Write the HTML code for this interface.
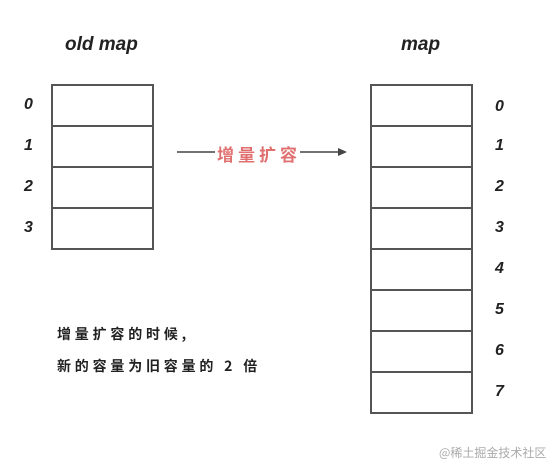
<!DOCTYPE html>
<html><head><meta charset="utf-8"><style>
body{margin:0;width:558px;height:470px;background:#fff;position:relative;overflow:hidden;font-family:"Liberation Sans","Noto Sans CJK SC",sans-serif;color:#222}
.t{position:absolute;font-style:italic;font-weight:bold;font-size:16px;line-height:1}
.box{position:absolute;border:2.5px solid #555;box-sizing:border-box;width:103px;height:43px;background:#fff}
.cn{position:absolute;font-family:"Noto Sans CJK SC",sans-serif;font-weight:bold;font-size:14px;letter-spacing:3.8px;color:#222}
</style></head><body>
<div class="t" style="left:65px;top:35px;font-size:19px">old map</div>
<div class="t" style="left:401px;top:35px;font-size:19px">map</div>
<div class="box" style="left:51px;top:84px"></div>
<div class="box" style="left:51px;top:125px"></div>
<div class="box" style="left:51px;top:166px"></div>
<div class="box" style="left:51px;top:207px"></div>
<div class="t" style="left:24px;top:97px">0</div>
<div class="t" style="left:24px;top:138px">1</div>
<div class="t" style="left:24px;top:179px">2</div>
<div class="t" style="left:24px;top:220px">3</div>
<div class="box" style="left:370px;top:84px"></div>
<div class="box" style="left:370px;top:125px"></div>
<div class="box" style="left:370px;top:166px"></div>
<div class="box" style="left:370px;top:207px"></div>
<div class="box" style="left:370px;top:248px"></div>
<div class="box" style="left:370px;top:289px"></div>
<div class="box" style="left:370px;top:330px"></div>
<div class="box" style="left:370px;top:371px"></div>
<div class="t" style="left:495px;top:99px">0</div>
<div class="t" style="left:495px;top:138px">1</div>
<div class="t" style="left:495px;top:179px">2</div>
<div class="t" style="left:495px;top:220px">3</div>
<div class="t" style="left:495px;top:261px">4</div>
<div class="t" style="left:495px;top:302px">5</div>
<div class="t" style="left:495px;top:343px">6</div>
<div class="t" style="left:495px;top:384px">7</div>
<svg style="position:absolute;left:0;top:0" width="558" height="470">
<line x1="177" y1="152" x2="215" y2="152" stroke="#444" stroke-width="1.5"/>
<line x1="300" y1="152" x2="340" y2="152" stroke="#444" stroke-width="1.5"/>
<polygon points="338,148 347,152 338,156" fill="#444"/>
</svg>
<div class="cn" style="left:217px;top:141px;font-size:17px;color:#e07070;letter-spacing:4px">增量扩容</div>
<div class="cn" style="left:57px;top:324px">增量扩容的时候,</div>
<div class="cn" style="left:57px;top:356px">新的容量为旧容量的 2 倍</div>
<div style="position:absolute;left:439px;top:444px;font-size:12px;color:#aaa;font-family:'Noto Sans CJK SC',sans-serif">@稀土掘金技术社区</div>
</body></html>
